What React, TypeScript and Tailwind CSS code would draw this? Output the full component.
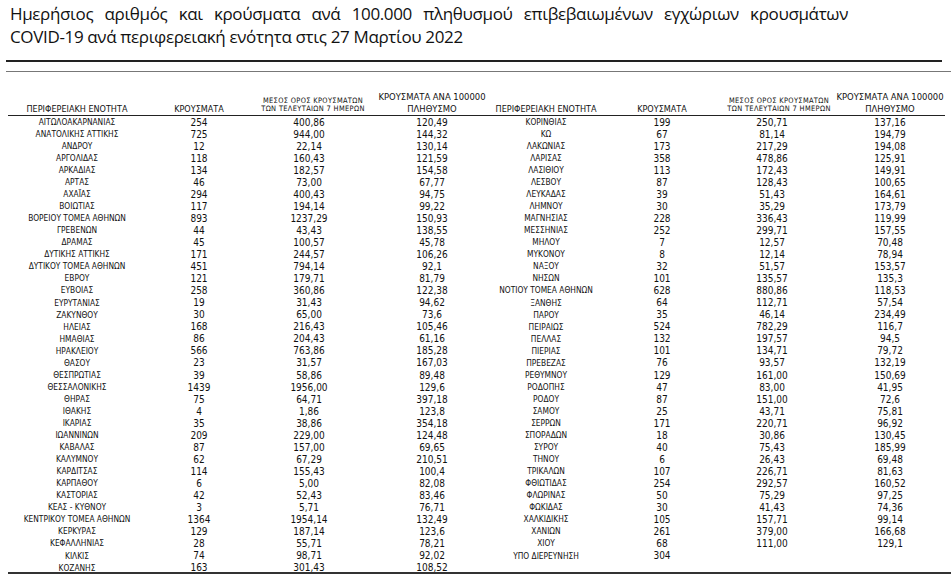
import React from 'react';

type Row = [string, string, string, string];

const leftRows: Row[] = [
  ['ΑΙΤΩΛΟΑΚΑΡΝΑΝΙΑΣ', '254', '400,86', '120,49'],
  ['ΑΝΑΤΟΛΙΚΗΣ ΑΤΤΙΚΗΣ', '725', '944,00', '144,32'],
  ['ΑΝΔΡΟΥ', '12', '22,14', '130,14'],
  ['ΑΡΓΟΛΙΔΑΣ', '118', '160,43', '121,59'],
  ['ΑΡΚΑΔΙΑΣ', '134', '182,57', '154,58'],
  ['ΑΡΤΑΣ', '46', '73,00', '67,77'],
  ['ΑΧΑΪΑΣ', '294', '400,43', '94,75'],
  ['ΒΟΙΩΤΙΑΣ', '117', '194,14', '99,22'],
  ['ΒΟΡΕΙΟΥ ΤΟΜΕΑ ΑΘΗΝΩΝ', '893', '1237,29', '150,93'],
  ['ΓΡΕΒΕΝΩΝ', '44', '43,43', '138,55'],
  ['ΔΡΑΜΑΣ', '45', '100,57', '45,78'],
  ['ΔΥΤΙΚΗΣ ΑΤΤΙΚΗΣ', '171', '244,57', '106,26'],
  ['ΔΥΤΙΚΟΥ ΤΟΜΕΑ ΑΘΗΝΩΝ', '451', '794,14', '92,1'],
  ['ΕΒΡΟΥ', '121', '179,71', '81,79'],
  ['ΕΥΒΟΙΑΣ', '258', '360,86', '122,38'],
  ['ΕΥΡΥΤΑΝΙΑΣ', '19', '31,43', '94,62'],
  ['ΖΑΚΥΝΘΟΥ', '30', '65,00', '73,6'],
  ['ΗΛΕΙΑΣ', '168', '216,43', '105,46'],
  ['ΗΜΑΘΙΑΣ', '86', '204,43', '61,16'],
  ['ΗΡΑΚΛΕΙΟΥ', '566', '763,86', '185,28'],
  ['ΘΑΣΟΥ', '23', '31,57', '167,03'],
  ['ΘΕΣΠΡΩΤΙΑΣ', '39', '58,86', '89,48'],
  ['ΘΕΣΣΑΛΟΝΙΚΗΣ', '1439', '1956,00', '129,6'],
  ['ΘΗΡΑΣ', '75', '64,71', '397,18'],
  ['ΙΘΑΚΗΣ', '4', '1,86', '123,8'],
  ['ΙΚΑΡΙΑΣ', '35', '38,86', '354,18'],
  ['ΙΩΑΝΝΙΝΩΝ', '209', '229,00', '124,48'],
  ['ΚΑΒΑΛΑΣ', '87', '157,00', '69,65'],
  ['ΚΑΛΥΜΝΟΥ', '62', '67,29', '210,51'],
  ['ΚΑΡΔΙΤΣΑΣ', '114', '155,43', '100,4'],
  ['ΚΑΡΠΑΘΟΥ', '6', '5,00', '82,08'],
  ['ΚΑΣΤΟΡΙΑΣ', '42', '52,43', '83,46'],
  ['ΚΕΑΣ - ΚΥΘΝΟΥ', '3', '5,71', '76,71'],
  ['ΚΕΝΤΡΙΚΟΥ ΤΟΜΕΑ ΑΘΗΝΩΝ', '1364', '1954,14', '132,49'],
  ['ΚΕΡΚΥΡΑΣ', '129', '187,14', '123,6'],
  ['ΚΕΦΑΛΛΗΝΙΑΣ', '28', '55,71', '78,21'],
  ['ΚΙΛΚΙΣ', '74', '98,71', '92,02'],
  ['ΚΟΖΑΝΗΣ', '163', '301,43', '108,52'],
];

const rightRows: Row[] = [
  ['ΚΟΡΙΝΘΙΑΣ', '199', '250,71', '137,16'],
  ['ΚΩ', '67', '81,14', '194,79'],
  ['ΛΑΚΩΝΙΑΣ', '173', '217,29', '194,08'],
  ['ΛΑΡΙΣΑΣ', '358', '478,86', '125,91'],
  ['ΛΑΣΙΘΙΟΥ', '113', '172,43', '149,91'],
  ['ΛΕΣΒΟΥ', '87', '128,43', '100,65'],
  ['ΛΕΥΚΑΔΑΣ', '39', '51,43', '164,61'],
  ['ΛΗΜΝΟΥ', '30', '35,29', '173,79'],
  ['ΜΑΓΝΗΣΙΑΣ', '228', '336,43', '119,99'],
  ['ΜΕΣΣΗΝΙΑΣ', '252', '299,71', '157,55'],
  ['ΜΗΛΟΥ', '7', '12,57', '70,48'],
  ['ΜΥΚΟΝΟΥ', '8', '12,14', '78,94'],
  ['ΝΑΞΟΥ', '32', '51,57', '153,57'],
  ['ΝΗΣΩΝ', '101', '135,57', '135,3'],
  ['ΝΟΤΙΟΥ ΤΟΜΕΑ ΑΘΗΝΩΝ', '628', '880,86', '118,53'],
  ['ΞΑΝΘΗΣ', '64', '112,71', '57,54'],
  ['ΠΑΡΟΥ', '35', '46,14', '234,49'],
  ['ΠΕΙΡΑΙΩΣ', '524', '782,29', '116,7'],
  ['ΠΕΛΛΑΣ', '132', '197,57', '94,5'],
  ['ΠΙΕΡΙΑΣ', '101', '134,71', '79,72'],
  ['ΠΡΕΒΕΖΑΣ', '76', '93,57', '132,19'],
  ['ΡΕΘΥΜΝΟΥ', '129', '161,00', '150,69'],
  ['ΡΟΔΟΠΗΣ', '47', '83,00', '41,95'],
  ['ΡΟΔΟΥ', '87', '151,00', '72,6'],
  ['ΣΑΜΟΥ', '25', '43,71', '75,81'],
  ['ΣΕΡΡΩΝ', '171', '220,71', '96,92'],
  ['ΣΠΟΡΑΔΩΝ', '18', '30,86', '130,45'],
  ['ΣΥΡΟΥ', '40', '75,43', '185,99'],
  ['ΤΗΝΟΥ', '6', '26,43', '69,48'],
  ['ΤΡΙΚΑΛΩΝ', '107', '226,71', '81,63'],
  ['ΦΘΙΩΤΙΔΑΣ', '254', '292,57', '160,52'],
  ['ΦΛΩΡΙΝΑΣ', '50', '75,29', '97,25'],
  ['ΦΩΚΙΔΑΣ', '30', '41,43', '74,36'],
  ['ΧΑΛΚΙΔΙΚΗΣ', '105', '157,71', '99,14'],
  ['ΧΑΝΙΩΝ', '261', '379,00', '166,68'],
  ['ΧΙΟΥ', '68', '111,00', '129,1'],
  ['ΥΠΟ ΔΙΕΡΕΥΝΗΣΗ', '304', '', ''],
  ['', '', '', ''],
];

// column widths: left block then right block
const leftW = ['w-[138px]', 'w-[106px]', 'w-[114px]', 'w-[132px]'];
const rightW = ['w-[96px]', 'w-[136px]', 'w-[84px]', 'w-[152px]'];

const cell = 'flex shrink-0 justify-center whitespace-nowrap';
const nameText = 'text-[8.3px]';
const numText = 'text-[10px]';

const HeaderBlock: React.FC<{ widths: string[]; shiftAvg: string }> = ({ widths, shiftAvg }) => (
  <div className="flex shrink-0 items-end">
    <div className={`${cell} ${widths[0]} text-[9px] leading-[12px]`}>ΠΕΡΙΦΕΡΕΙΑΚΗ ΕΝΟΤΗΤΑ</div>
    <div className={`${cell} ${widths[1]} text-[9px] leading-[12px]`}>ΚΡΟΥΣΜΑΤΑ</div>
    <div className={`${cell} ${widths[2]} ${shiftAvg} flex-col items-center text-[7.4px] tracking-[0.35px] leading-[8.4px] pb-[1.5px]`}>
      <span>ΜΕΣΟΣ ΟΡΟΣ ΚΡΟΥΣΜΑΤΩΝ</span>
      <span>ΤΩΝ ΤΕΛΕΥΤΑΙΩΝ 7 ΗΜΕΡΩΝ</span>
    </div>
    <div className={`${cell} ${widths[3]} flex-col items-center text-[9.4px] leading-[12px]`}>
      <span>ΚΡΟΥΣΜΑΤΑ ΑΝΑ 100000</span>
      <span>ΠΛΗΘΥΣΜΟ</span>
    </div>
  </div>
);

const DataBlock: React.FC<{ row: Row; widths: string[] }> = ({ row, widths }) => (
  <div className="flex shrink-0 items-center">
    <div className={`${cell} ${widths[0]} ${nameText}`}>{row[0]}</div>
    <div className={`${cell} ${widths[1]} ${numText}`}>{row[1]}</div>
    <div className={`${cell} ${widths[2]} ${numText}`}>{row[2]}</div>
    <div className={`${cell} ${widths[3]} ${numText}`}>{row[3]}</div>
  </div>
);

export default function App() {
  return (
    <div className="w-[951px] h-[577px] overflow-hidden bg-white text-[#111]">
      <div className="pt-[2px] pl-[10px] w-[848px] font-['Open_Sans',sans-serif] text-[17px] tracking-[-0.35px] leading-[23px]">
        <div className="whitespace-nowrap [text-align-last:justify]">
          Ημερήσιος αριθμός και κρούσματα ανά 100.000 πληθυσμού επιβεβαιωμένων εγχώριων κρουσμάτων
        </div>
        <div className="whitespace-nowrap">COVID-19 ανά περιφερειακή ενότητα στις 27 Μαρτίου 2022</div>
      </div>

      <div className="mt-[12px] ml-[6px] w-[936px] border-t-2 border-[#222]" />
      <div className="mt-[9px] ml-[6px] border-t border-[#777]" />

      <div className="font-['DejaVu_Sans_Condensed','Liberation_Sans',sans-serif] [font-stretch:condensed]">
        {/* header */}
        <div className="ml-[8px] w-[937px] h-[44px] flex items-end border-b border-[#222]">
          <HeaderBlock widths={leftW} shiftAvg="pl-[8px]" />
          <HeaderBlock widths={rightW} shiftAvg="pl-[14px]" />
        </div>

        {/* rows */}
        <div className="ml-[8px] h-[458px] border-b-2 border-[#333]">
          {leftRows.map((l, i) => (
            <div key={i} className="flex h-[12.06px] items-center">
              <DataBlock row={l} widths={leftW} />
              <DataBlock row={rightRows[i]} widths={rightW} />
            </div>
          ))}
        </div>
      </div>
    </div>
  );
}
